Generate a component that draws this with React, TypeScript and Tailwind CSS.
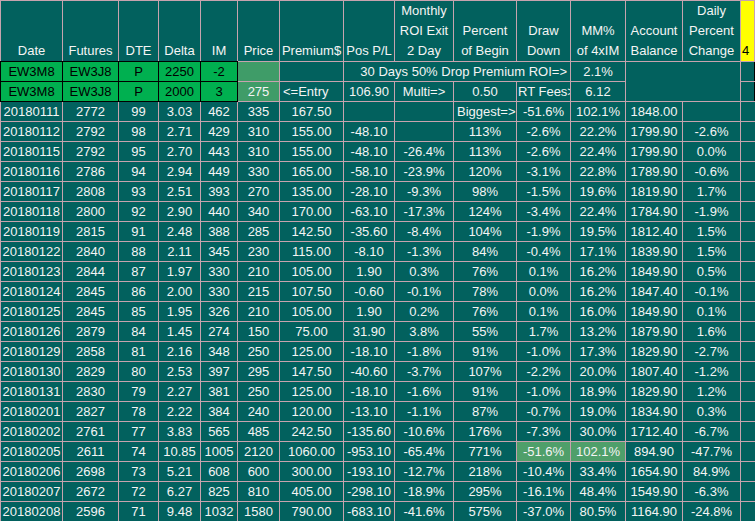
import React from 'react'

// column widths in px, taken from the sheet
const widths = [62, 56, 40, 42, 37, 42, 64, 51, 59, 63, 54, 55, 57, 58, 14, 1]

const rows: string[][] = [
  ['20180111', '2772', '99', '3.03', '462', '335', '167.50', '', '', 'Biggest=>', '-51.6%', '102.1%', '1848.00', ''],
  ['20180112', '2792', '98', '2.71', '429', '310', '155.00', '-48.10', '', '113%', '-2.6%', '22.2%', '1799.90', '-2.6%'],
  ['20180115', '2792', '95', '2.70', '443', '310', '155.00', '-48.10', '-26.4%', '113%', '-2.6%', '22.4%', '1799.90', '0.0%'],
  ['20180116', '2786', '94', '2.94', '449', '330', '165.00', '-58.10', '-23.9%', '120%', '-3.1%', '22.8%', '1789.90', '-0.6%'],
  ['20180117', '2808', '93', '2.51', '393', '270', '135.00', '-28.10', '-9.3%', '98%', '-1.5%', '19.6%', '1819.90', '1.7%'],
  ['20180118', '2800', '92', '2.90', '440', '340', '170.00', '-63.10', '-17.3%', '124%', '-3.4%', '22.4%', '1784.90', '-1.9%'],
  ['20180119', '2815', '91', '2.48', '388', '285', '142.50', '-35.60', '-8.4%', '104%', '-1.9%', '19.5%', '1812.40', '1.5%'],
  ['20180122', '2840', '88', '2.11', '345', '230', '115.00', '-8.10', '-1.3%', '84%', '-0.4%', '17.1%', '1839.90', '1.5%'],
  ['20180123', '2844', '87', '1.97', '330', '210', '105.00', '1.90', '0.3%', '76%', '0.1%', '16.2%', '1849.90', '0.5%'],
  ['20180124', '2845', '86', '2.00', '330', '215', '107.50', '-0.60', '-0.1%', '78%', '0.0%', '16.2%', '1847.40', '-0.1%'],
  ['20180125', '2845', '85', '1.95', '326', '210', '105.00', '1.90', '0.2%', '76%', '0.1%', '16.0%', '1849.90', '0.1%'],
  ['20180126', '2879', '84', '1.45', '274', '150', '75.00', '31.90', '3.8%', '55%', '1.7%', '13.2%', '1879.90', '1.6%'],
  ['20180129', '2858', '81', '2.16', '348', '250', '125.00', '-18.10', '-1.8%', '91%', '-1.0%', '17.3%', '1829.90', '-2.7%'],
  ['20180130', '2829', '80', '2.53', '397', '295', '147.50', '-40.60', '-3.7%', '107%', '-2.2%', '20.0%', '1807.40', '-1.2%'],
  ['20180131', '2830', '79', '2.27', '381', '250', '125.00', '-18.10', '-1.6%', '91%', '-1.0%', '18.9%', '1829.90', '1.2%'],
  ['20180201', '2827', '78', '2.22', '384', '240', '120.00', '-13.10', '-1.1%', '87%', '-0.7%', '19.0%', '1834.90', '0.3%'],
  ['20180202', '2761', '77', '3.83', '565', '485', '242.50', '-135.60', '-10.6%', '176%', '-7.3%', '30.0%', '1712.40', '-6.7%'],
  ['20180205', '2611', '74', '10.85', '1005', '2120', '1060.00', '-953.10', '-65.4%', '771%', '-51.6%', '102.1%', '894.90', '-47.7%'],
  ['20180206', '2698', '73', '5.21', '608', '600', '300.00', '-193.10', '-12.7%', '218%', '-10.4%', '33.4%', '1654.90', '84.9%'],
  ['20180207', '2672', '72', '6.27', '825', '810', '405.00', '-298.10', '-18.9%', '295%', '-16.1%', '48.4%', '1549.90', '-6.3%'],
  ['20180208', '2596', '71', '9.48', '1032', '1580', '790.00', '-683.10', '-41.6%', '575%', '-37.0%', '80.5%', '1164.90', '-24.8%'],
]

const headers: string[][] = [
  ['Date'], ['Futures'], ['DTE'], ['Delta'], ['IM'], ['Price'], ['Premium$'], ['Pos P/L'],
  ['Monthly', 'ROI Exit', '2 Day'], ['Percent', 'of Begin'], ['Draw', 'Down'], ['MM%', 'of 4xIM'],
  ['Account', 'Balance'], ['Daily', 'Percent', 'Change'],
]

const cell = 'p-0 border border-[#c7a3ae] text-center whitespace-nowrap overflow-hidden'
// double style wins the collapsed-border conflict, so the black edge shows on every side
const green = 'p-0 border border-double border-black bg-[#00b050] text-black text-center whitespace-nowrap'
const muted = 'p-0 border border-[#c7a3ae] bg-[#3f9c68] text-center'

export default function App() {
  return (
    <div className="min-h-screen bg-[#02615e] text-[#f4f4f4] text-[13px] leading-[19px] font-['Liberation_Sans',Arial,sans-serif]">
      <table className="table-fixed border-collapse w-[755px]">
        <colgroup>
          {widths.map((w, i) => (
            <col key={i} style={{ width: w }} />
          ))}
        </colgroup>
        <tbody>
          <tr className="h-[60px]">
            {headers.map((lines, i) => (
              <td key={i} className={`${cell} align-bottom leading-[20px]`}>
                {lines.map((l, j) => (
                  <div key={j}>{l}</div>
                ))}
              </td>
            ))}
            <td className="p-0 border border-[#c7a3ae] bg-[#ffff00] text-black align-bottom text-left pl-px leading-[20px]">4</td>
            <td className="p-0 border-0"></td>
          </tr>

          <tr className="h-[20px]">
            <td className={green}>EW3M8</td>
            <td className={green}>EW3J8</td>
            <td className={green}>P</td>
            <td className={green}>2250</td>
            <td className={green}>-2</td>
            <td className={muted}></td>
            <td className={cell}></td>
            <td colSpan={4} className={`${cell} text-right pr-[3px]`}>30 Days 50% Drop Premium ROI=&gt;</td>
            <td className={cell}>2.1%</td>
            <td colSpan={2} rowSpan={2} className={cell}></td>
            <td className="p-0 border border-[#c7a3ae] border-r-black border-r-double"></td>
            <td className="p-0 border-0"></td>
          </tr>

          <tr className="h-[20px]">
            <td className={green}>EW3M8</td>
            <td className={green}>EW3J8</td>
            <td className={green}>P</td>
            <td className={green}>2000</td>
            <td className={green}>3</td>
            <td className={muted}>275</td>
            <td className={`${cell} text-left pl-[3px]`}>&lt;=Entry</td>
            <td className={cell}>106.90</td>
            <td className={cell}>Multi=&gt;</td>
            <td className={cell}>0.50</td>
            <td className={`${cell} text-left pl-px`}>RT Fees&gt;</td>
            <td className={cell}>6.12</td>
            <td className="p-0 border border-[#c7a3ae] border-r-black border-r-double"></td>
            <td className="p-0 border-0"></td>
          </tr>

          {rows.map((r) => (
            <tr key={r[0]} className="h-[20px]">
              {r.map((v, i) => {
                const hi = r[0] === '20180205' && (i === 10 || i === 11)
                const left = v === 'Biggest=>'
                return (
                  <td
                    key={i}
                    className={`${cell} ${hi ? 'bg-[#4f9f6a]' : ''} ${left ? 'text-left pl-[3px]' : ''}`}
                  >
                    {v}
                  </td>
                )
              })}
              <td className="p-0 border border-[#c7a3ae] border-r-0"></td>
              <td className="p-0 border-0"></td>
            </tr>
          ))}
        </tbody>
      </table>
    </div>
  )
}
